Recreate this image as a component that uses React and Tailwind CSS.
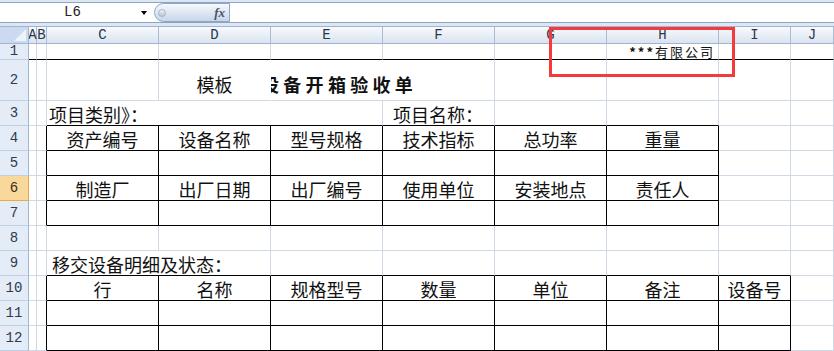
import React from "react"

// column index: 0 = row header, 1 = A, 2 = B, 3..8 = C..H, 9 = I, 10 = J
const LETTERS = ["", "A", "B", "C", "D", "E", "F", "G", "H", "I", "J"]
const SPAN = { 1: "", 2: "col-span-2", 3: "col-span-3" }

const inTable = (r, c) =>
  (r >= 4 && r <= 7 && c >= 3 && c <= 8) || (r >= 10 && r <= 12 && c >= 3 && c <= 9)

const Cell = ({ r, c, span = 1, noRight = false, clip = true, className = "", children }) => {
  const last = c + span - 1
  const rightBlack = inTable(r, last) || inTable(r, last + 1)
  let bottomBlack = r === 1
  for (let k = c; k <= last; k++) {
    if (inTable(r, k) || inTable(r + 1, k)) bottomBlack = true
  }
  const rc = noRight ? "border-r-white" : rightBlack ? "border-r-black" : "border-r-[#d0d7e5]"
  const bc = bottomBlack ? "border-b-black" : "border-b-[#d0d7e5]"
  return (
    <div
      className={`${SPAN[span]} flex min-w-0 whitespace-nowrap border-r border-b ${clip ? "overflow-hidden" : ""} ${rc} ${bc} ${className}`}
    >
      {children}
    </div>
  )
}

const RowHead = ({ n, active }) => (
  <div
    className={`flex items-center justify-center border-r border-b font-['Liberation_Mono',monospace] text-[14px] ${
      active
        ? "bg-[#f9d89c] border-r-[#f0a54a] border-b-[#f0a54a] text-[#3a2e1c]"
        : "bg-[#e4ecf7] border-r-[#9eb6ce] border-b-[#bfcfe4] text-[#2d3b4e]"
    }`}
  >
    {n}
  </div>
)

const Label = ({ children }) => (
  <span className="flex w-full items-center justify-center pt-[1px]">{children}</span>
)

// plain rows: empty cells in columns A..J
const EmptyCells = ({ r, from = 1, to = 10 }) => {
  const cells = []
  for (let c = from; c <= to; c++) cells.push(<Cell key={c} r={r} c={c} />)
  return cells
}

const LabelRow = ({ r, labels }) => (
  <>
    <RowHead n={r} active={r === 6} />
    <Cell r={r} c={1} />
    <Cell r={r} c={2} />
    {labels.map((t, i) => (
      <Cell key={i} r={r} c={3 + i}>
        <Label>{t}</Label>
      </Cell>
    ))}
    <EmptyCells r={r} from={3 + labels.length} />
  </>
)

const BlankRow = ({ r }) => (
  <>
    <RowHead n={r} active={r === 6} />
    <EmptyCells r={r} />
  </>
)

export default function App() {
  return (
    <div className="relative h-[351px] w-[834px] overflow-hidden bg-white font-['Noto_Sans_CJK_SC',sans-serif] text-[#111]">
      {/* Formula bar */}
      <div className="h-[27px] border-b border-b-[#9fb4cf] bg-[#dde7f3] pt-[2px]">
        <div className="flex h-[21px] border-y border-y-[#8ca5c6] bg-white">
          <div className="flex w-[152px] items-center">
            <span className="flex-1 pl-[4px] text-center font-['Liberation_Mono',monospace] text-[14px] text-[#222]">L6</span>
            <span className="mr-[5px] h-0 w-0 border-x-[3px] border-t-[4px] border-x-transparent border-t-black" />
          </div>
          <div className="ml-[2px] flex w-[76px] items-center rounded-l-[10px] border border-[#8ea7c7] bg-linear-to-b from-[#f7f9fd] to-[#c6d6ea]">
            <span className="ml-[3px] h-[8px] w-[8px] rounded-full border border-[#a9b4c2] bg-linear-to-b from-[#f2f4f7] to-[#b9c3cf]" />
            <span className="ml-auto mr-[4px] font-['Liberation_Serif',serif] text-[13px] font-bold italic text-[#4a5564]">fx</span>
          </div>
          <div className="flex-1 bg-white" />
        </div>
      </div>

      {/* Sheet grid */}
      <div className="grid grid-cols-[29px_8px_10px_112px_112px_112px_112px_112px_112px_72px_1fr] grid-rows-[17px_16px_41px_repeat(10,25px)]">
        {/* column headers */}
        <div className="relative border-r border-b border-r-[#9eb6ce] border-b-[#9eb6ce] bg-[#cbdaf0]">
          <svg className="absolute right-[2px] bottom-[2px]" width="12" height="12" viewBox="0 0 12 12">
            <polygon points="12,0 12,12 0,12" fill="#eef3fa" />
          </svg>
        </div>
        {LETTERS.slice(1).map((l) => (
          <div
            key={l}
            className="flex items-center justify-center border-r border-b border-r-[#a9bcd4] border-b-[#9eb6ce] bg-linear-to-b from-[#f8fafd] to-[#dae3ef] font-['Liberation_Mono',monospace] text-[14px] text-[#2a3646]"
          >
            {l}
          </div>
        ))}

        {/* row 1 */}
        <RowHead n={1} />
        <EmptyCells r={1} to={7} />
        <Cell r={1} c={8} clip={false} className="items-center justify-end pr-[3px]">
          <span className="text-[13px] leading-[15px] tracking-[2px]">
            <span className="font-bold">***</span>有限公司
          </span>
        </Cell>
        <EmptyCells r={1} from={9} />

        {/* row 2 */}
        <RowHead n={2} />
        <Cell r={2} c={1} />
        <Cell r={2} c={2} />
        <Cell r={2} c={3} />
        <Cell r={2} c={4} noRight className="items-end justify-center pb-[7px] text-[18px] leading-none">
          模板
        </Cell>
        <Cell r={2} c={5} span={2} className="items-end pb-[7px] text-[18px] leading-none">
          <span className="-ml-[10px] font-bold tracking-[4.3px]">设备开箱验收单</span>
        </Cell>
        <EmptyCells r={2} from={7} />

        {/* row 3 */}
        <RowHead n={3} />
        <Cell r={3} c={1} />
        <Cell r={3} c={2} />
        <Cell r={3} c={3} span={3} className="items-center pl-[2px] pt-[2px] text-[18px] leading-none">
          项目类别》：
        </Cell>
        <Cell r={3} c={6} className="items-center pl-[10px] pt-[2px] text-[18px] leading-none">
          项目名称：
        </Cell>
        <EmptyCells r={3} from={7} />

        <div className="contents text-[18px] leading-none">
          <LabelRow r={4} labels={["资产编号", "设备名称", "型号规格", "技术指标", "总功率", "重量"]} />
          <BlankRow r={5} />
          <LabelRow r={6} labels={["制造厂", "出厂日期", "出厂编号", "使用单位", "安装地点", "责任人"]} />
          <BlankRow r={7} />
          <BlankRow r={8} />
        </div>

        {/* row 9 */}
        <RowHead n={9} />
        <Cell r={9} c={1} />
        <Cell r={9} c={2} />
        <Cell r={9} c={3} span={2} className="items-center pl-[5px] pt-[2px] text-[18px] leading-none">
          移交设备明细及状态：
        </Cell>
        <EmptyCells r={9} from={5} />

        <div className="contents text-[18px] leading-none">
          <LabelRow r={10} labels={["行", "名称", "规格型号", "数量", "单位", "备注", "设备号"]} />
          <BlankRow r={11} />
          <BlankRow r={12} />
        </div>
      </div>

      {/* red annotation box */}
      <div className="absolute left-[549px] top-[27px] h-[50px] w-[186px] border-[3px] border-[#f43a3a]" />
    </div>
  )
}
